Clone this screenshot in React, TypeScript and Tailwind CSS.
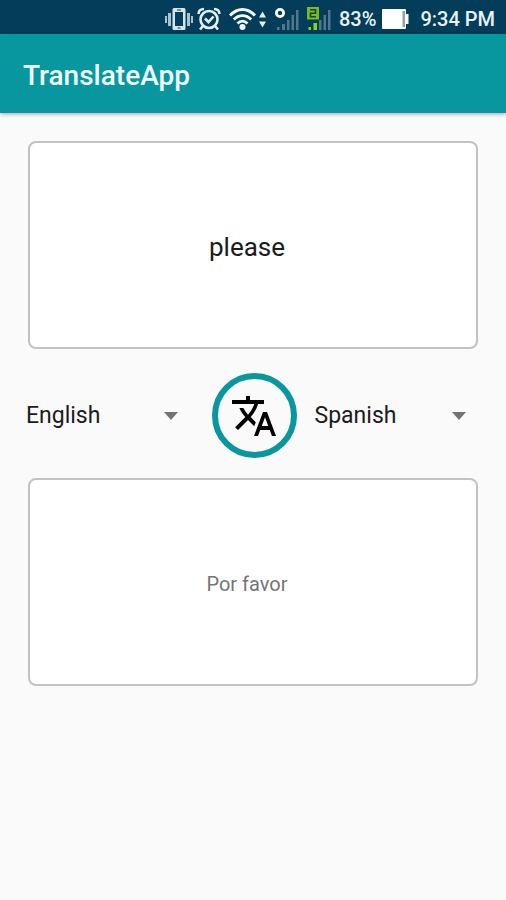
import { useState } from "react";

const LANGUAGES = ["English", "Spanish", "French", "German", "Portuguese"];

const VibrateIcon = () => (
    <svg className="h-6 w-7" viewBox="0 0 28 24" fill="#d3e4ea">
        <path d="M0 9h2v7H0zM3 6h3v13H3zM22 6h3v13h-3zM26 9h2v7h-2z" opacity=".8" />
        <path fillRule="evenodd" d="M9 1h10a1.500 1.500 0 0 1 1.500 1.500v19A1.500 1.500 0 0 1 19 23H9a1.500 1.500 0 0 1-1.500-1.500v-19A1.500 1.500 0 0 1 9 1zm1 4v14h8V5z" />
        <path d="M12 2.500h4v1h-4zM12.500 20.500h3v1h-3z" fill="#033d59" />
    </svg>
);

const AlarmIcon = () => (
    <svg className="h-6 w-6" viewBox="0 0 24 24" fill="none" stroke="#e4eff3" strokeWidth="2.600">
        <circle cx="12" cy="12.500" r="8.500" />
        <path d="M8 11.500l3.500 3.500 5-5.500M1.500 7c0-3.500 2-5 5.500-5M22.500 7c0-3.500-2-5-5.500-5M6 19l-3 3.500M18 19l3 3.500" />
    </svg>
);

const WifiIcon = () => (
    <svg className="h-6 w-[38px]" viewBox="0 0 38 24">
        <g fill="none" stroke="#f4fafb" strokeWidth="2.800">
            <path d="M1 8.500C8.500 0.500 18.500 0.500 26 8.500" />
            <path d="M4.800 12.500c5-5.300 12.400-5.300 17.400 0" />
            <path d="M8.500 16.500c3-3.100 7-3.100 10 0" />
        </g>
        <circle cx="13.500" cy="20" r="3" fill="#f4fafb" />
        <path d="M30 10.500l3.500-6 3.500 6zM30 14.500h7l-3.500 6z" fill="#e4eff3" />
    </svg>
);

const SignalOneIcon = () => (
    <svg className="h-6 w-6" viewBox="0 0 24 24">
        <circle cx="5" cy="6" r="3.600" fill="none" stroke="#fff" strokeWidth="2.800" />
        <path d="M2 20h2.500v3H2zM7 17h3v6H7zM12 13h2.500v10H12zM16.500 8H19v15h-2.500zM21 3h2.500v20H21z" fill="#50778c" />
    </svg>
);

const SignalTwoIcon = () => (
    <svg className="h-6 w-6" viewBox="0 0 24 24">
        <path d="M0 0h12v12.500H0z" fill="#7bb82a" />
        <path d="M3 2.800h5.500v3.500h-5v3.500H9" fill="none" stroke="#124a35" strokeWidth="1.600" />
        <path d="M1.500 20H4v3H1.500zM6.500 16H10v7H6.500z" fill="#8bd320" />
        <path d="M12 13h2.500v10H12zM16.500 8H19v15h-2.500zM21 3h2.500v20H21z" fill="#50778c" />
    </svg>
);

const BatteryIcon = () => (
    <svg className="h-5 w-7" viewBox="0 0 28 20">
        <path d="M1 0h22a1 1 0 0 1 1 1v4h2.500v10H24v4a1 1 0 0 1-1 1H1a1 1 0 0 1-1-1V1a1 1 0 0 1 1-1z" fill="#fff" />
        <path d="M20.500 2H23v16h-2.500z" fill="#8ba4b0" />
    </svg>
);

const StatusBar = () => (
    <div className="flex h-[34px] items-center justify-end bg-[#033d59] pt-1 pr-[11px] text-xl font-medium text-[#e9f2f5]">
        <VibrateIcon />
        <span className="ml-1"><AlarmIcon /></span>
        <span className="ml-2"><WifiIcon /></span>
        <span className="ml-2"><SignalOneIcon /></span>
        <span className="ml-2"><SignalTwoIcon /></span>
        <span className="ml-2">83%</span>
        <span className="ml-[6px]"><BatteryIcon /></span>
        <span className="ml-[10px]">9:34 PM</span>
    </div>
);

interface LanguageSelectProps {
    label: string;
    value: string;
    onChange: (value: string) => void;
}

const LanguageSelect = ({ label, value, onChange }: LanguageSelectProps) => (
    <div className="relative">
        <select
            aria-label={label}
            value={value}
            onChange={(e) => onChange(e.target.value)}
            className="w-full appearance-none bg-transparent text-[23px] leading-8 text-[#1c1c1c] outline-none"
        >
            {LANGUAGES.map((language) => (
                <option key={language}>{language}</option>
            ))}
        </select>
        <svg className="pointer-events-none absolute top-3 right-0 h-2 w-[14px]" viewBox="0 0 14 8" fill="#737373">
            <path d="M0 0h14L7 8z" />
        </svg>
    </div>
);

const App = () => {
    const [text, setText] = useState("please");
    const [from, setFrom] = useState("English");
    const [to, setTo] = useState("Spanish");

    return (
        <div className="min-h-screen bg-[#fafafa] font-['Roboto',sans-serif]">
            <StatusBar />
            <header className="flex h-[79px] items-center bg-[#08979f] px-[23px] pt-1 shadow-[0_1px_4px_rgba(0,0,0,0.35)]">
                <h1 className="text-[28px] font-medium text-[#f2fbfb]">TranslateApp</h1>
            </header>
            <main className="pt-7">
                <div className="px-7">
                    <input
                        aria-label="Text to translate"
                        value={text}
                        onChange={(e) => setText(e.target.value)}
                        className="h-[208px] w-full rounded-lg border-2 border-[#c2c2c2] bg-white pt-1 pr-3 text-center text-[26px] text-[#1c1c1c] outline-none"
                    />
                </div>
                <div className="flex items-center pt-6 pb-5">
                    <div className="flex-1 pr-[34px] pl-[26px]">
                        <LanguageSelect label="From" value={from} onChange={setFrom} />
                    </div>
                    <button aria-label="Translate" className="flex size-[85px] items-center justify-center rounded-full border-[6px] border-[#08979f]">
                        <svg className="size-12" viewBox="0 0 24 24">
                            <path d="M12.870 15.070l-2.540-2.510.030-.030c1.740-1.940 2.980-4.170 3.710-6.530H17V4h-7V2H8v2H1v1.990h11.170C11.500 7.920 10.440 9.750 9 11.350 8.070 10.320 7.300 9.190 6.690 8h-2c.730 1.630 1.730 3.170 2.980 4.560l-5.090 5.020L4 19l5-5 3.110 3.110.760-2.040zM18.500 10h-2L12 22h2l1.120-3h4.750L21 22h2l-4.500-12zm-2.620 7l1.620-4.330L19.120 17h-3.240z" />
                        </svg>
                    </button>
                    <div className="flex-1 pr-10 pl-[18px]">
                        <LanguageSelect label="To" value={to} onChange={setTo} />
                    </div>
                </div>
                <div className="px-7">
                    <output className="flex h-[208px] w-full items-center justify-center rounded-lg border-2 border-[#c2c2c2] bg-white pt-1 pr-3 text-xl text-[#757575]">
                        Por favor
                    </output>
                </div>
            </main>
        </div>
    );
};

export default App;
